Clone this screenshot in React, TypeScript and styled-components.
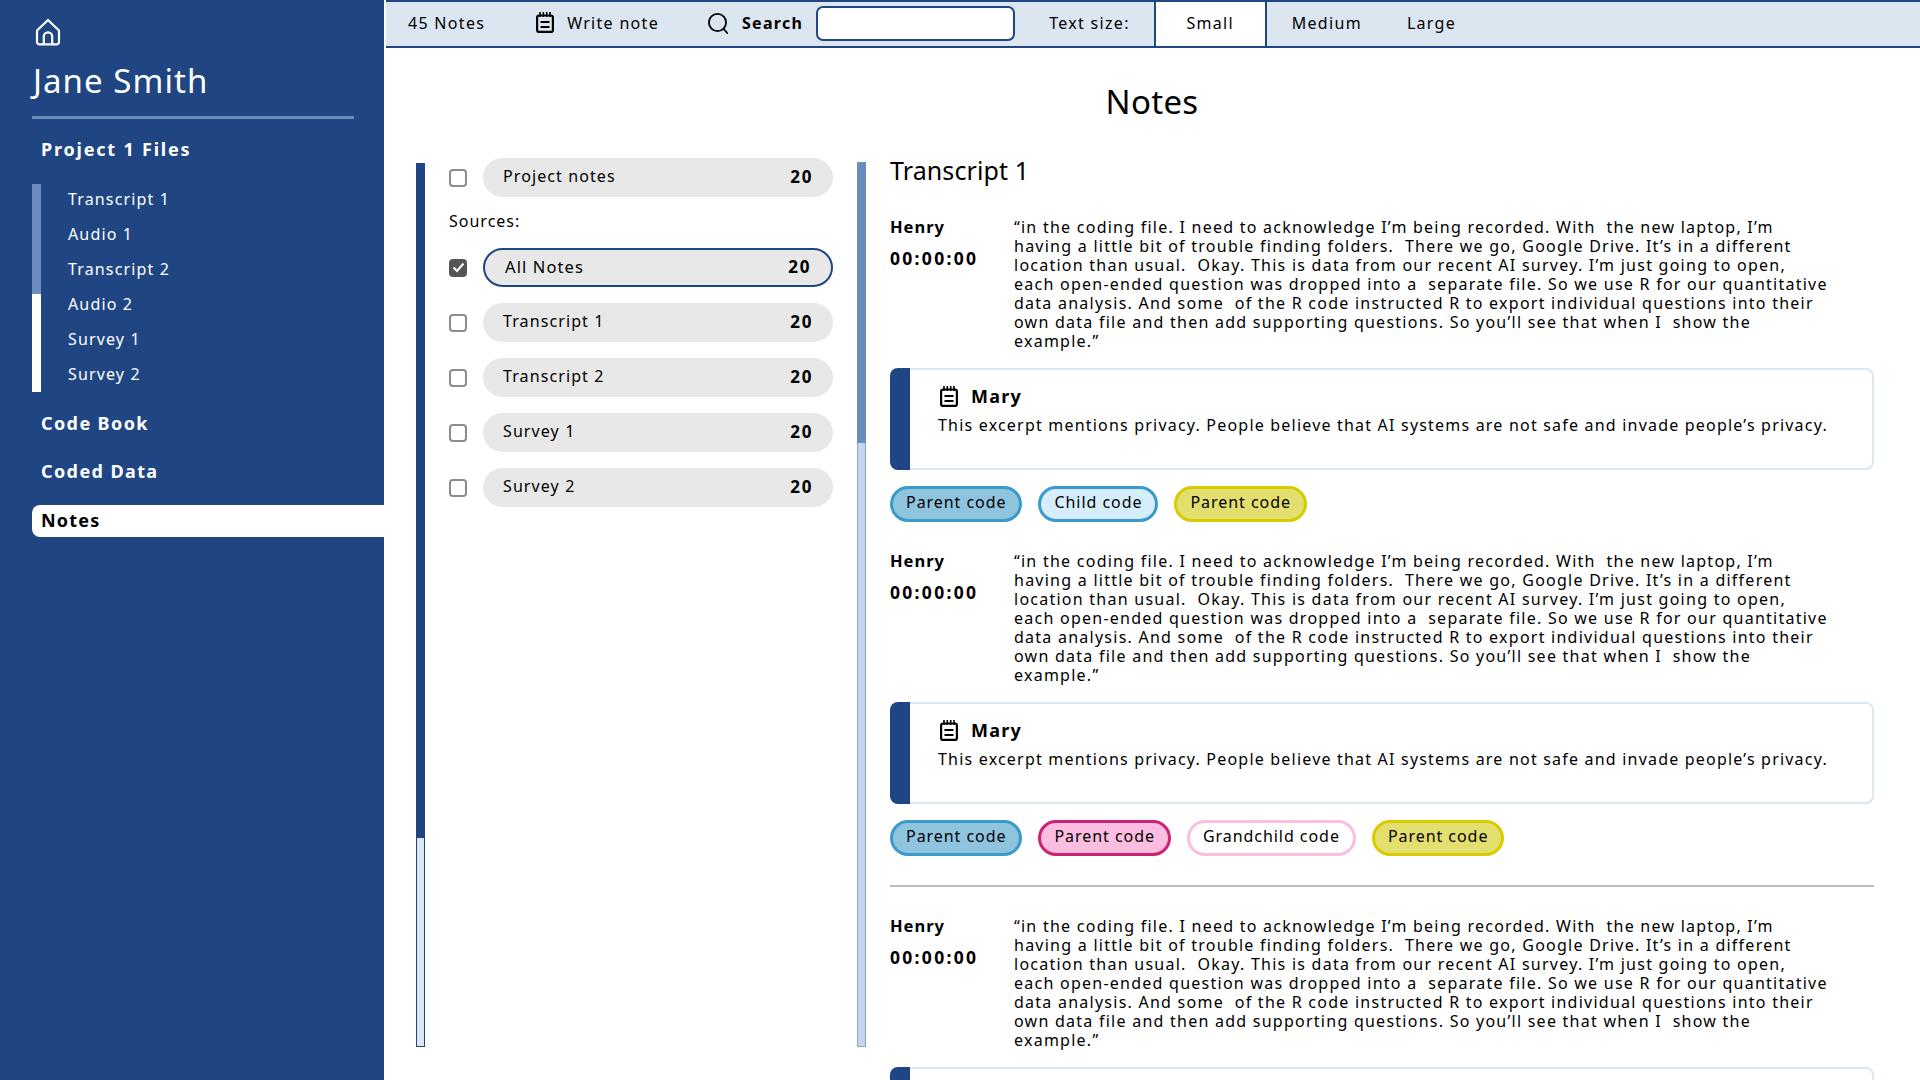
import React from "react"
import styled, { createGlobalStyle } from "styled-components"

const navy = "#1f4682"
const steel = "#6c8cbb"
const mist = "#dce6f0"

const GlobalStyle = createGlobalStyle`
  html, body {
    margin: 0;
    padding: 0;
    background: #fff;
    color: #000;
    font-family: "Noto Sans", "Open Sans", sans-serif;
  }
  * { box-sizing: border-box; }
`

const Page = styled.div`
  display: grid;
  grid-template-columns: 384px 1fr;
  width: 1920px;
  height: 1080px;
  overflow: hidden;
`

const Sidebar = styled.nav`
  background: ${navy};
  color: #fff;
  padding: 18px 0 0 32px;
`

const HomeLink = styled.div`
  display: block;
  height: 27px;
  margin-left: 3px;
  svg { display: block; }
`

const UserName = styled.div`
  font-size: 33px;
  line-height: 46px;
  letter-spacing: 1.05px;
  margin: 13px 0 0 1px;
`

const SideRule = styled.div`
  width: 322px;
  height: 3px;
  background: ${steel};
  margin: 12px 0 17px;
`

const SideHeading = styled.div<{ $wide?: boolean }>`
  font-size: 18px;
  line-height: 26px;
  font-weight: 700;
  letter-spacing: ${p => (p.$wide ? 1.8 : 1.4)}px;
  padding-left: 9px;
  margin-bottom: 22px;
`

const FileGroup = styled.div`
  display: flex;
  height: 208px;
  margin-bottom: 18px;
`

const FileBar = styled.div`
  width: 9px;
  background: #fff;
`

const FileBarThumb = styled.div`
  height: 110px;
  background: ${steel};
`

const FileList = styled.div`
  display: flex;
  flex-direction: column;
  gap: 11px;
  padding: 3px 0 6px 27px;
`

const FileItem = styled.div`
  font-size: 16px;
  line-height: 24px;
  letter-spacing: 1.15px;
`

const ActiveTab = styled.div`
  height: 32px;
  margin-top: -1px;
  background: #fff;
  color: #000;
  border-radius: 8px 0 0 8px;
  font-size: 18px;
  line-height: 31px;
  font-weight: 700;
  letter-spacing: 1.2px;
  padding-left: 9px;
`

const Main = styled.main`
  min-width: 0;
  overflow: hidden;
`

const TopBar = styled.header`
  display: flex;
  align-items: stretch;
  height: 48px;
  margin-left: 2px;
  background: ${mist};
  border-top: 2px solid ${navy};
  border-bottom: 2px solid ${navy};
  font-size: 16px;
  letter-spacing: 1.3px;
`

const BarItem = styled.div<{ $left: number; $bold?: boolean }>`
  display: flex;
  align-items: center;
  gap: 13px;
  margin-left: ${p => p.$left}px;
  padding-bottom: 3px;
  font-weight: ${p => (p.$bold ? 700 : 400)};
`

const SearchBox = styled.div`
  width: 199px;
  height: 35px;
  margin: 4px 0 0 13px;
  background: #fff;
  border: 2px solid ${navy};
  border-radius: 7px;
`

const SizeTab = styled.div<{ $left: number; $width: number }>`
  display: flex;
  align-items: center;
  justify-content: center;
  width: ${p => p.$width}px;
  margin-left: ${p => p.$left}px;
  padding-bottom: 3px;
  background: #fff;
  border-left: 2px solid ${navy};
  border-right: 2px solid ${navy};
`

const PageTitle = styled.h1`
  margin: 0;
  height: 110px;
  padding-top: 27px;
  font-size: 33px;
  line-height: 54px;
  font-weight: 400;
  letter-spacing: 0.3px;
  text-align: center;
`

const Panels = styled.div`
  display: flex;
  align-items: flex-start;
  padding-left: 32px;
`

const Track = styled.div<{ $top: number; $height: number; $fill: string; $edge: string }>`
  flex: none;
  width: 9px;
  height: ${p => p.$height}px;
  margin-top: ${p => p.$top}px;
  background: ${p => p.$fill};
  border: 1px solid ${p => p.$edge};
  border-top: none;
`

const Thumb = styled.div<{ $height: number; $color: string }>`
  width: 9px;
  margin-left: -1px;
  height: ${p => p.$height}px;
  background: ${p => p.$color};
`

const FilterColumn = styled.div`
  flex: none;
  width: 432px;
  padding-left: 24px;
`

const FilterRow = styled.div`
  display: flex;
  align-items: center;
  gap: 16px;
  margin-bottom: 16px;
`

const Box = styled.span<{ $checked?: boolean }>`
  flex: none;
  display: flex;
  align-items: center;
  justify-content: center;
  width: 18px;
  height: 18px;
  border: 2px solid #8c8c8c;
  border-radius: 4px;
  background: ${p => (p.$checked ? "#555" : "#fff")};
  border-color: ${p => (p.$checked ? "#555" : "#8c8c8c")};
`

const Pill = styled.div<{ $active?: boolean }>`
  display: flex;
  align-items: center;
  justify-content: space-between;
  width: 350px;
  height: 39px;
  border-radius: 20px;
  background: #e8e8e8;
  border: ${p => (p.$active ? `2px solid ${navy}` : "none")};
  padding: 0 20px 3px;
  font-size: ${p => (p.$active ? 16.5 : 16)}px;
  letter-spacing: 1.1px;
`

const PillCount = styled.span`
  font-size: 17px;
  font-weight: 700;
  letter-spacing: 1.6px;
`

const SourcesLabel = styled.div`
  font-size: 16px;
  line-height: 24px;
  letter-spacing: 1px;
  margin: -4px 0 15px;
`

const ReadingPane = styled.section`
  flex: none;
  width: 984px;
  margin-left: 24px;
`

const PaneTitle = styled.h2`
  margin: 0 0 36px;
  font-size: 25px;
  line-height: 24px;
  font-weight: 400;
  letter-spacing: 0.1px;
`

const Excerpt = styled.div`
  display: flex;
  margin-bottom: 17px;
`

const Speaker = styled.div`
  flex: none;
  width: 124px;
  margin-top: -1px;
  font-size: 16.5px;
  font-weight: 700;
  letter-spacing: 1px;
  line-height: 19px;
`

const Stamp = styled.div`
  margin-top: 13px;
  font-size: 17.5px;
  letter-spacing: 2.3px;
`

const Quote = styled.div`
  font-size: 16px;
  line-height: 19px;
  letter-spacing: 1.25px;
  white-space: pre;
`

const NoteCard = styled.div`
  display: flex;
  height: 102px;
  margin-bottom: 16px;
  border: 2px solid ${mist};
  border-left: none;
  border-radius: 8px;
`

const NoteEdge = styled.div`
  flex: none;
  width: 20px;
  margin: -2px 0;
  background: ${navy};
  border-radius: 8px 0 0 8px;
`

const NoteBody = styled.div`
  padding: 14px 0 0 28px;
`

const NoteAuthor = styled.div`
  display: flex;
  align-items: center;
  gap: 13px;
  height: 24px;
  margin-left: 2px;
  font-size: 18px;
  font-weight: 700;
  letter-spacing: 1.2px;
`

const NoteText = styled.div`
  margin-top: 5px;
  font-size: 16px;
  line-height: 24px;
  letter-spacing: 1.2px;
`

const TagRow = styled.div`
  display: flex;
  gap: 16px;
`

const Tag = styled.span<{ $fill: string; $edge: string }>`
  display: flex;
  align-items: center;
  height: 36px;
  padding: 0 13px 4px;
  background: ${p => p.$fill};
  border: 3px solid ${p => p.$edge};
  border-radius: 18px;
  font-size: 16px;
  letter-spacing: 0.95px;
`

const Exchange = styled.article`
  margin-bottom: 30px;
`

const Divider = styled.hr`
  height: 2px;
  margin: -1px 0 30px;
  border: none;
  background: #bdbdbd;
`

const HomeIcon = () => (
  <svg width="26" height="28" viewBox="0 0 26 28" fill="none" stroke="#fff" strokeWidth="2.2" strokeLinejoin="round">
    <path d="M2 12.5 13 2l11 10.5V24a2.4 2.4 0 0 1-2.4 2.4H4.4A2.4 2.4 0 0 1 2 24Z" />
    <path d="M8.8 26v-7.4a4.2 4.2 0 0 1 8.4 0V26" />
  </svg>
)

const NotepadIcon = () => (
  <svg width="18" height="21" viewBox="0 0 18 21" fill="none" stroke="#000" strokeWidth="2.2">
    <rect x="1.1" y="3.5" width="15.8" height="16.4" rx="2" />
    <path d="M4 0v5M7.3 0v5M10.7 0v5M14 0v5" strokeWidth="1.6" />
    <path d="M4.5 10h9M4.5 15h9" />
  </svg>
)

const SearchIcon = () => (
  <svg width="22" height="22" viewBox="0 0 22 22" fill="none" stroke="#000" strokeWidth="1.8">
    <circle cx="10.5" cy="10.5" r="8.6" />
    <path d="m16.8 17 3.4 4" strokeLinecap="round" />
  </svg>
)

const CheckIcon = () => (
  <svg width="13" height="11" viewBox="0 0 13 11" fill="none" stroke="#fff" strokeWidth="2">
    <path d="M1.5 5.5 5 9l6.5-7.5" />
  </svg>
)

const files = ["Transcript 1", "Audio 1", "Transcript 2", "Audio 2", "Survey 1", "Survey 2"]
const sources = ["Transcript 1", "Transcript 2", "Survey 1", "Survey 2"]

const quote = `“in the coding file. I need to acknowledge I’m being recorded. With  the new laptop, I’m
having a little bit of trouble finding folders.  There we go, Google Drive. It’s in a different
location than usual.  Okay. This is data from our recent AI survey. I’m just going to open,
each open-ended question was dropped into a  separate file. So we use R for our quantitative
data analysis. And some  of the R code instructed R to export individual questions into their
own data file and then add supporting questions. So you’ll see that when I  show the
example.”`

const tagColors = {
  blue: { fill: "#8fc4df", edge: "#3a9bcb" },
  sky: { fill: "#d6eefb", edge: "#3a9bcb" },
  yellow: { fill: "#e3df6e", edge: "#d8cb00" },
  pink: { fill: "#fdbde0", edge: "#cc2277" },
  blush: { fill: "#fff", edge: "#fdbde0" },
}

type TagSpec = { label: string; color: keyof typeof tagColors }

const firstTags: TagSpec[] = [
  { label: "Parent code", color: "blue" },
  { label: "Child code", color: "sky" },
  { label: "Parent code", color: "yellow" },
]

const secondTags: TagSpec[] = [
  { label: "Parent code", color: "blue" },
  { label: "Parent code", color: "pink" },
  { label: "Grandchild code", color: "blush" },
  { label: "Parent code", color: "yellow" },
]

// the last card starts right at the bottom of the window, only its top edge shows
function ExchangeBlock({ tags, noteHidden }: { tags?: TagSpec[]; noteHidden?: boolean }) {
  return (
    <Exchange>
      <Excerpt>
        <Speaker>
          Henry
          <Stamp>00:00:00</Stamp>
        </Speaker>
        <Quote>{quote}</Quote>
      </Excerpt>
      <NoteCard>
        <NoteEdge />
        {!noteHidden && (
          <NoteBody>
            <NoteAuthor>
              <NotepadIcon />
              Mary
            </NoteAuthor>
            <NoteText>
              This excerpt mentions privacy. People believe that AI systems are not safe and invade people’s privacy.
            </NoteText>
          </NoteBody>
        )}
      </NoteCard>
      {tags && (
        <TagRow>
          {tags.map((t, i) => (
            <Tag key={i} $fill={tagColors[t.color].fill} $edge={tagColors[t.color].edge}>
              {t.label}
            </Tag>
          ))}
        </TagRow>
      )}
    </Exchange>
  )
}

export default function App() {
  return (
    <Page>
      <GlobalStyle />
      <Sidebar>
        <HomeLink>
          <HomeIcon />
        </HomeLink>
        <UserName>Jane Smith</UserName>
        <SideRule />
        <SideHeading $wide>Project 1 Files</SideHeading>
        <FileGroup>
          <FileBar>
            <FileBarThumb />
          </FileBar>
          <FileList>
            {files.map((f, i) => (
              <FileItem key={i}>{f}</FileItem>
            ))}
          </FileList>
        </FileGroup>
        <SideHeading>Code Book</SideHeading>
        <SideHeading>Coded Data</SideHeading>
        <ActiveTab>Notes</ActiveTab>
      </Sidebar>
      <Main>
        <TopBar>
          <BarItem $left={22}>45 Notes</BarItem>
          <BarItem $left={51}>
            <NotepadIcon />
            Write note
          </BarItem>
          <BarItem $left={48} $bold>
            <SearchIcon />
            Search
          </BarItem>
          <SearchBox />
          <BarItem $left={34}>Text size:</BarItem>
          <SizeTab $left={24} $width={113}>
            Small
          </SizeTab>
          <BarItem $left={25}>Medium</BarItem>
          <BarItem $left={45}>Large</BarItem>
        </TopBar>
        <PageTitle>Notes</PageTitle>
        <Panels>
          <Track $top={5} $height={884} $fill={mist} $edge={navy}>
            <Thumb $height={675} $color={navy} />
          </Track>
          <FilterColumn>
            <FilterRow>
              <Box />
              <Pill>
                Project notes
                <PillCount>20</PillCount>
              </Pill>
            </FilterRow>
            <SourcesLabel>Sources:</SourcesLabel>
            <FilterRow>
              <Box $checked>
                <CheckIcon />
              </Box>
              <Pill $active>
                All Notes
                <PillCount>20</PillCount>
              </Pill>
            </FilterRow>
            {sources.map((s, i) => (
              <FilterRow key={i}>
                <Box />
                <Pill>
                  {s}
                  <PillCount>20</PillCount>
                </Pill>
              </FilterRow>
            ))}
          </FilterColumn>
          <Track $top={4} $height={885} $fill="#c5d6ec" $edge="#8ba3c9">
            <Thumb $height={281} $color={steel} />
          </Track>
          <ReadingPane>
            <PaneTitle>Transcript 1</PaneTitle>
            <ExchangeBlock tags={firstTags} />
            <ExchangeBlock tags={secondTags} />
            <Divider />
            <ExchangeBlock noteHidden />
          </ReadingPane>
        </Panels>
      </Main>
    </Page>
  )
}
